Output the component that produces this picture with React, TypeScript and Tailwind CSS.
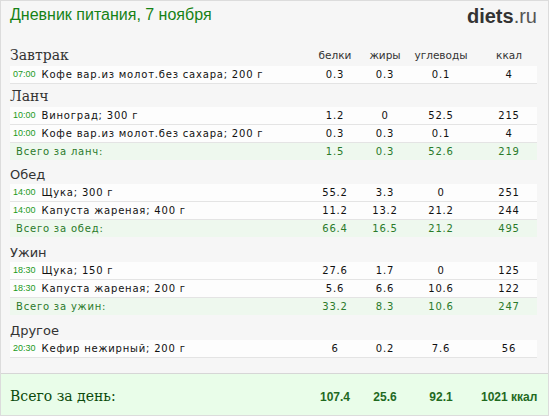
import React from "react";

type Item = { time: string; name: string; p: string; f: string; c: string; k: string };
type Meal = {
  title: string;
  serif?: boolean;
  head: string;
  items: Item[];
  total?: { label: string; p: string; f: string; c: string; k: string };
};

const meals: Meal[] = [
  {
    title: "Завтрак",
    serif: true,
    head: "h-[24px]",
    items: [{ time: "07:00", name: "Кофе вар.из молот.без сахара; 200 г", p: "0.3", f: "0.3", c: "0.1", k: "4" }],
  },
  {
    title: "Ланч",
    serif: true,
    head: "h-[23px]",
    items: [
      { time: "10:00", name: "Виноград; 300 г", p: "1.2", f: "0", c: "52.5", k: "215" },
      { time: "10:00", name: "Кофе вар.из молот.без сахара; 200 г", p: "0.3", f: "0.3", c: "0.1", k: "4" },
    ],
    total: { label: "Всего за ланч:", p: "1.5", f: "0.3", c: "52.6", k: "219" },
  },
  {
    title: "Обед",
    head: "h-[24px]",
    items: [
      { time: "14:00", name: "Щука; 300 г", p: "55.2", f: "3.3", c: "0", k: "251" },
      { time: "14:00", name: "Капуста жареная; 400 г", p: "11.2", f: "13.2", c: "21.2", k: "244" },
    ],
    total: { label: "Всего за обед:", p: "66.4", f: "16.5", c: "21.2", k: "495" },
  },
  {
    title: "Ужин",
    head: "h-[25px]",
    items: [
      { time: "18:30", name: "Щука; 150 г", p: "27.6", f: "1.7", c: "0", k: "125" },
      { time: "18:30", name: "Капуста жареная; 200 г", p: "5.6", f: "6.6", c: "10.6", k: "122" },
    ],
    total: { label: "Всего за ужин:", p: "33.2", f: "8.3", c: "10.6", k: "247" },
  },
  {
    title: "Другое",
    head: "h-[25px]",
    items: [{ time: "20:30", name: "Кефир нежирный; 200 г", p: "6", f: "0.2", c: "7.6", k: "56" }],
  },
];

const cols = "grid grid-cols-[300px_50px_50px_62px_65px]";
const verdana = "font-['DejaVu_Sans',sans-serif]";

function Nums({ p, f, c, k }: { p: string; f: string; c: string; k: string }) {
  return (
    <>
      <span className="text-center">{p}</span>
      <span className="text-center">{f}</span>
      <span className="text-center">{c}</span>
      <span className="pl-[9px] text-center">{k}</span>
    </>
  );
}

export default function App() {
  return (
    <div className="h-[416px] w-[549px] border border-[#dcdcdc] bg-[#f6f6f6] flex flex-col">
      <div className="flex h-[41px] items-start justify-between pl-[9px] pr-[11px] pt-[3px]">
        <h1 className="font-['Liberation_Sans',sans-serif] text-[16px] leading-[22px] text-[#168216]">
          Дневник питания, 7 ноября
        </h1>
        <div className="font-['Liberation_Sans',sans-serif] text-[20px] leading-[24px] text-[#333]">
          <span className="font-bold">diets</span>
          <span className="text-[#555]">.ru</span>
        </div>
      </div>

      <div className={`flex flex-col pl-[9px] pr-[11px] ${verdana}`}>
        {meals.map((m, i) => (
          <div key={m.title} className="flex flex-col">
            <div className={`${cols} ${m.head} items-end ${m.serif ? "pb-[2px]" : "pb-0"}`}>
              <span
                className={
                  m.serif
                    ? "font-['DejaVu_Serif',serif] text-[14px] leading-[18px] text-[#333]"
                    : "text-[13px] leading-[18px] text-[#333]"
                }
              >
                {m.title}
              </span>
              {i === 0 && (
                <>
                  <span className="text-center text-[10.5px] text-[#333]">белки</span>
                  <span className="text-center text-[10.5px] text-[#333]">жиры</span>
                  <span className="text-center text-[10.5px] text-[#333]">углеводы</span>
                  <span className="pl-[9px] text-center text-[10.5px] text-[#333]">ккал</span>
                </>
              )}
            </div>
            {m.items.map((it, j) => (
              <div
                key={j}
                className={`${cols} h-[18px] items-center border-b border-[#e4e4e4] bg-[#fdfdfd] text-[10px] tracking-[0.8px] text-[#111]`}
              >
                <span className="flex items-center gap-[6px] pl-[3px]">
                  <span className="font-['Liberation_Sans',sans-serif] text-[9px] tracking-normal text-[#1b9a1b]">{it.time}</span>
                  <span>{it.name}</span>
                </span>
                <Nums p={it.p} f={it.f} c={it.c} k={it.k} />
              </div>
            ))}
            {m.total && (
              <div className={`${cols} h-[17px] items-center bg-[#eef8ee] text-[10px] tracking-[0.8px] text-[#2a7a2a]`}>
                <span className="pl-[6px]">{m.total.label}</span>
                <Nums p={m.total.p} f={m.total.f} c={m.total.c} k={m.total.k} />
              </div>
            )}
          </div>
        ))}
      </div>

      <div className="mt-auto flex h-[42px] items-center border-t border-[#d6d6d6] bg-[#e9fde9] pl-[9px] pr-[11px] pt-[4px]">
        <div className={`${cols} w-full items-center`}>
          <span className="font-['DejaVu_Serif',serif] text-[14px] text-[#0b4a0b]">Всего за день:</span>
          <span className="text-center font-['Liberation_Sans',sans-serif] text-[12px] font-bold text-[#1f6a1f]">107.4</span>
          <span className="text-center font-['Liberation_Sans',sans-serif] text-[12px] font-bold text-[#1f6a1f]">25.6</span>
          <span className="text-center font-['Liberation_Sans',sans-serif] text-[12px] font-bold text-[#1f6a1f]">92.1</span>
          <span className="pl-[9px] text-center font-['Liberation_Sans',sans-serif] text-[12px] font-bold text-[#1f6a1f] whitespace-nowrap">1021 ккал</span>
        </div>
      </div>
    </div>
  );
}
